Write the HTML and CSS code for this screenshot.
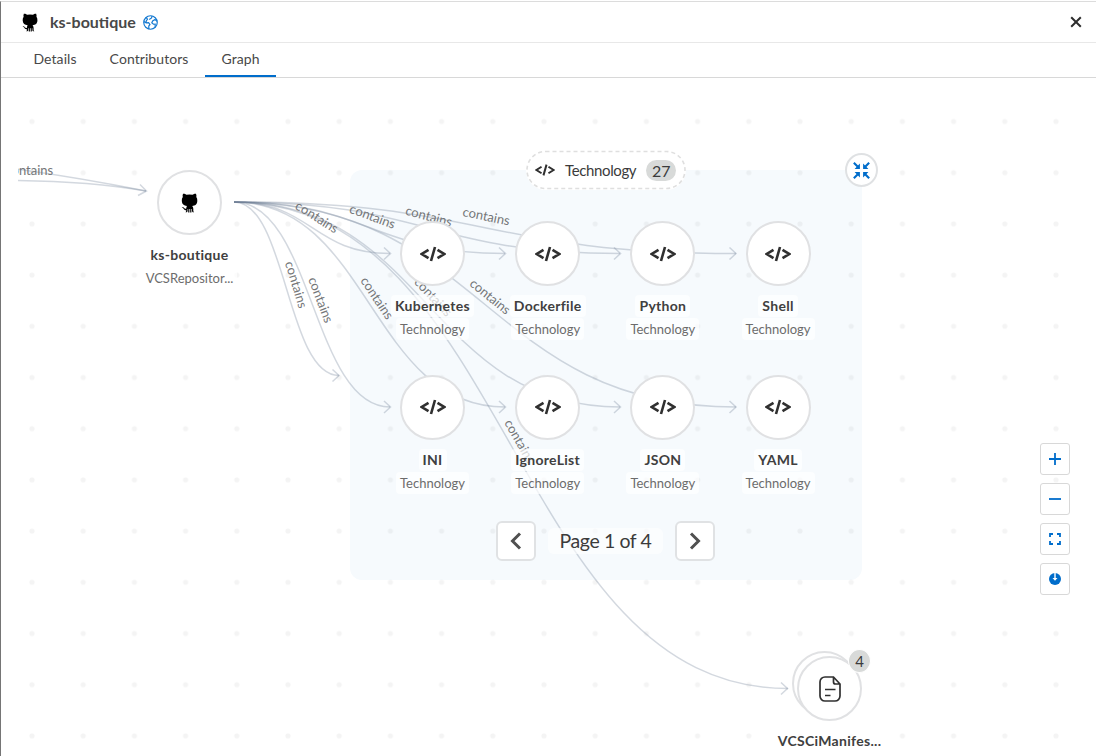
FILE: index.html
```html
<!DOCTYPE html>
<html lang="en">
<head>
<meta charset="utf-8">
<title>ks-boutique</title>
<link rel="stylesheet" href="styles.css">
</head>
<body>
<svg class="defs" width="0" height="0" aria-hidden="true">
  <symbol id="octocat" viewBox="0 0 16 20">
    <path d="M1.500 .8C2.500 .4 4.200 1.200 5 1.800Q8 1.200 11 1.800C12 1.100 13.700 .4 14.500 .8Q15.200 2.800 14.800 4Q16 5.500 15.800 8C15.600 11.500 13.700 12.700 10.700 13Q11.800 14 11.800 15.800V18.300L12.600 19.300H11.200L10.500 18.300V16H9.900V19.500H8.700V16H7.900V19.500H6.700V16H6.100V18.300L5.300 19.300H4L4.700 18.300V17.200C2.600 17.500 2.400 15.500 1.200 14.800L.2 14.100Q1.700 13.600 2.700 15.100Q3.500 16 4.800 15.500Q4.800 13.900 5.500 13C2.300 12.700 .5 11.300 .3 8Q.1 5.500 1.300 4Q.8 2.700 1.500 .8Z"/>
  </symbol>
  <symbol id="code" viewBox="0 0 26 16">
    <path d="M8.500 3.800 1.800 8l6.700 4.200M17.500 3.800 24.200 8l-6.700 4.200M15 1 11 15" fill="none" stroke="currentColor" stroke-width="2.600"/>
  </symbol>
</svg>
<div class="panel">
  <header class="header">
    <svg class="header-logo"><use href="#octocat"/></svg>
    <h1 class="title">ks-boutique</h1>
    <svg class="globe" viewBox="0 0 14 14"><circle cx="7" cy="7" r="6.300"/><path d="M.9 6.200 3 7.300 5.200 7.200 6.500 8.800 5.400 10.300V13.200M3 2.300 4.200 4 3 5.600V7.300M8.500 .9 8 2.800 5.800 4.200M13.200 6 11.200 4.200 9 5.600 8.200 7.300 9.800 8.600 11.400 8.500 11.300 11.500"/></svg>
    <svg class="close" viewBox="0 0 12 12"><path d="M1.200 1.200l9.600 9.600M10.800 1.200l-9.600 9.600"/></svg>
  </header>
  <nav class="tabs">
    <a class="tab">Details</a>
    <a class="tab">Contributors</a>
    <a class="tab tab-active">Graph</a>
  </nav>
  <main class="canvas">
    <div class="group"></div>
    <svg class="edges" viewBox="1 78 1095 678">
      <defs>
        <pattern id="dots" x="6.400" y="95.900" width="51.200" height="51.200" patternUnits="userSpaceOnUse"><circle cx="25.600" cy="25.600" r="2.500" class="dot"/></pattern>
        <clipPath id="view"><rect x="18" y="78" width="1078" height="678"/></clipPath>
      </defs>
      <rect x="1" y="78" width="1095" height="678" fill="url(#dots)"/>
      <g class="lines" clip-path="url(#view)">
        <path d="M-40 162Q50 172 146 191"/>
        <path d="M-40 181Q70 178 146 191"/>
        <path d="M140 184.500l6.500 6.500-8.500 4.500"/>
        <path id="e1" d="M234 202C312.500 202 312.500 253.500 390 253.500"/>
        <path id="e2" d="M234 202C370 202 370 253.500 505 253.500"/>
        <path id="e3" d="M234 202C427.500 202 427.500 253.500 620 253.500"/>
        <path id="e4" d="M234 202C485 202 485 253.500 736 253.500"/>
        <path id="e5" d="M234 202C312.500 202 312.500 407 390 407"/>
        <path id="e6" d="M234 202C370 202 370 407 505 407"/>
        <path id="e7" d="M234 202C427.500 202 427.500 407 620 407"/>
        <path id="e8" d="M234 202C485 202 485 407 736 407"/>
        <path id="e9" d="M234 202C286.500 202 286.500 375.500 339 375.500"/>
        <path id="e10" d="M234 202C511 202 511 688.500 788 688.500"/>
        <path d="M384 247.500l6.500 6-6.500 6M499 247.500l6.500 6-6.500 6M614 247.500l6.500 6-6.500 6M729.500 247.500l6.500 6-6.500 6M384 401l6.500 6-6.500 6M499 401l6.500 6-6.500 6M614 401l6.500 6-6.500 6M729.500 401l6.500 6-6.500 6M332.500 369.500l6.500 6-6.500 6M781 682.500l6.500 6-6.500 6"/>
      </g>
      <g class="edge-labels">
        <text x="5.500" y="174.500" class="edge-label-start" clip-path="url(#view)">contains</text>
        <text dx="-1" dy="-7"><textPath href="#e1" startOffset="50%">contains</textPath></text>
        <text dx="-1" dy="-7"><textPath href="#e2" startOffset="50%">contains</textPath></text>
        <text dx="-1" dy="-7"><textPath href="#e3" startOffset="50%">contains</textPath></text>
        <text dx="-1" dy="-7"><textPath href="#e4" startOffset="50%">contains</textPath></text>
        <text dx="-1" dy="-5"><textPath href="#e5" startOffset="50%">contains</textPath></text>
        <text dx="-1" dy="-5"><textPath href="#e6" startOffset="50%">contains</textPath></text>
        <text dx="-1" dy="-5"><textPath href="#e7" startOffset="50%">contains</textPath></text>
        <text dx="-1" dy="-5"><textPath href="#e8" startOffset="50%">contains</textPath></text>
        <text dx="-1" dy="-6"><textPath href="#e9" startOffset="50%">contains</textPath></text>
        <text dx="1" dy="-5"><textPath href="#e10" startOffset="50%">contains</textPath></text>
      </g>
    </svg>

    <div class="node repo"><div class="circle"><svg class="node-logo"><use href="#octocat"/></svg></div><b class="name">ks-boutique</b><span class="type">VCSRepositor...</span></div>

    <div class="nodes">
      <div class="node"><div class="circle"><svg class="code"><use href="#code"/></svg></div><b class="name">Kubernetes</b><span class="type">Technology</span></div>
      <div class="node"><div class="circle"><svg class="code"><use href="#code"/></svg></div><b class="name">Dockerfile</b><span class="type">Technology</span></div>
      <div class="node"><div class="circle"><svg class="code"><use href="#code"/></svg></div><b class="name">Python</b><span class="type">Technology</span></div>
      <div class="node"><div class="circle"><svg class="code"><use href="#code"/></svg></div><b class="name">Shell</b><span class="type">Technology</span></div>
      <div class="node"><div class="circle"><svg class="code"><use href="#code"/></svg></div><b class="name">INI</b><span class="type">Technology</span></div>
      <div class="node"><div class="circle"><svg class="code"><use href="#code"/></svg></div><b class="name">IgnoreList</b><span class="type">Technology</span></div>
      <div class="node"><div class="circle"><svg class="code"><use href="#code"/></svg></div><b class="name">JSON</b><span class="type">Technology</span></div>
      <div class="node"><div class="circle"><svg class="code"><use href="#code"/></svg></div><b class="name">YAML</b><span class="type">Technology</span></div>
    </div>

    <div class="group-title">
      <svg class="group-outline" viewBox="0 0 160 39"><rect x="1" y="1" width="158" height="37" rx="18.500"/></svg>
      <svg class="code code-small"><use href="#code"/></svg><span class="group-name">Technology</span><span class="count">27</span>
    </div>
    <div class="collapse"><svg viewBox="0 0 16 16"><path class="collapse-head" d="M6.500 1.500v5h-5zM9.500 1.500v5h5zM6.500 14.500v-5h-5zM9.500 14.500v-5h5z"/><path class="collapse-tail" d="M.8.8 5 5M15.200.8 11 5M.8 15.200 5 11M15.200 15.200 11 11"/></svg></div>

    <div class="pager">
      <button class="page-button"><svg viewBox="0 0 12 18"><path d="M10 1.500 2.500 9l7.500 7.500"/></svg></button>
      <span class="page-text">Page 1 of 4</span>
      <button class="page-button"><svg viewBox="0 0 12 18"><path d="M2 1.500 9.500 9 2 16.500"/></svg></button>
    </div>

    <div class="stack-back"></div>
    <div class="node manifest"><div class="circle"><svg class="document" viewBox="0 0 22 26"><path d="M6 1h8.500L21 8v12a5 5 0 0 1-5 5H6a5 5 0 0 1-5-5V6a5 5 0 0 1 5-5ZM14.500 1v5q0 2 2 2H21M6 13.500h10.500M6 19.500h5.500"/></svg></div><b class="name">VCSCiManifes...</b></div>
    <span class="count stack-count">4</span>

    <div class="tools">
      <button class="tool"><svg viewBox="0 0 14 14"><path d="M7 1v12M1 7h12"/></svg></button>
      <button class="tool"><svg viewBox="0 0 14 14"><path d="M1 7h12"/></svg></button>
      <button class="tool"><svg viewBox="0 0 14 14"><path d="M2 5V2h3M9 2h3v3M12 9v3H9M5 12H2V9"/></svg></button>
      <button class="tool"><svg viewBox="0 0 14 14"><circle cx="7" cy="7" r="6" class="solid"/><path class="knock" d="M7 0v7"/><path class="knock-head" d="M4.500 6h5L7 8.800z"/></svg></button>
    </div>
  </main>
</div>
</body>
</html>
```
FILE: styles.css
```css
* { box-sizing: border-box; }
body { margin: 0; padding-top: 1px; height: 756px; overflow: hidden; background: #fff; font-family: Lato, "Open Sans", sans-serif; color: #3b3b3b; }
.defs { position: absolute; }
.panel { display: flex; flex-direction: column; height: 755px; border-top: 1px solid #dcdcdc; border-left: 1px solid #757575; }
.header { display: flex; align-items: center; height: 41px; padding: 0 14px 0 20px; border-bottom: 1px solid #e8e8e8; }
.header-logo { width: 18px; height: 19px; margin-right: 11px; }
.title { margin: 0; padding-bottom: 2px; font-size: 16px; font-weight: 700; color: #484848; }
.globe { width: 15px; height: 15px; margin-left: 7px; fill: none; stroke: #1479d1; stroke-width: 1.100; }
.close { width: 12px; height: 12px; margin-left: auto; stroke: #2d2d2d; stroke-width: 2; }
.tabs { display: flex; height: 35px; padding-left: 16px; border-bottom: 1px solid #d8d8d8; }
.tab { display: flex; align-items: center; justify-content: center; padding: 0 16.500px 3px; height: 34px; font-size: 14px; letter-spacing: .07px; color: #484848; }
.tab-active { border-bottom: 2px solid #006dcb; padding-bottom: 1px; }
.canvas { position: relative; flex: 1; overflow: hidden; }
.group { position: absolute; left: 348.600px; top: 92px; width: 512px; height: 409.500px; border-radius: 12px; background: #f6fafd; }
.edges { position: absolute; left: 0; top: 0; width: 1095px; height: 678px; }
.dot { fill: rgba(0, 0, 0, .045); }
.lines path { fill: none; stroke: rgba(110, 125, 150, .3); stroke-width: 1.500; }
.edge-labels { font-size: 13px; fill: #747678; text-anchor: middle; }
.edge-label-start { text-anchor: start; }
.node { display: flex; flex-direction: column; align-items: center; width: 115px; }
.circle { display: flex; align-items: center; justify-content: center; width: 65px; height: 65px; border: 2px solid #e0e1e3; border-radius: 50%; background: #fff; margin-bottom: 9px; }
.name, .type { height: 22px; line-height: 22px; padding: 0 4px; border-radius: 4px; background: rgba(255, 255, 255, .7); white-space: nowrap; }
.name { font-size: 14px; letter-spacing: .3px; color: #404040; margin-bottom: 1px; }
.type { font-size: 13px; color: #6c6c6c; }
.repo { position: absolute; left: 131px; top: 92px; }
.node-logo { width: 17px; height: 20px; }
.nodes { position: absolute; left: 374px; top: 143px; display: grid; grid-template-columns: repeat(4, 115.200px); grid-template-rows: 153.500px 120px; }
.code { width: 26px; height: 16px; color: #303030; }
.code-small { width: 20px; height: 14px; }
.group-title { position: absolute; left: 525px; top: 72px; width: 160px; height: 40px; display: flex; align-items: center; padding-left: 9px; border-radius: 20px; background: #fff; }
.group-outline { position: absolute; left: 0; top: 0; width: 160px; height: 40px; fill: none; stroke: #dfdfdf; stroke-width: 1.600; stroke-dasharray: 4 3; }
.group-name { margin-left: 10px; font-size: 15px; letter-spacing: -.37px; }
.count { display: flex; align-items: center; justify-content: center; width: 30px; height: 21px; margin-left: 10px; border-radius: 11px; background: #d8dad9; font-size: 16px; }
.collapse { position: absolute; left: 844px; top: 75px; width: 33px; height: 34px; display: flex; align-items: center; justify-content: center; border: 2px solid #dfe1e3; border-radius: 50%; background: #fff; }
.collapse svg { width: 17px; height: 17px; }
.collapse-head { fill: #006dcb; }
.collapse-tail { stroke: #006dcb; stroke-width: 2; }
.pager { position: absolute; left: 495px; top: 443px; display: flex; align-items: center; gap: 12px; }
.page-button { display: flex; align-items: center; justify-content: center; width: 40px; height: 40px; padding: 0; border: 2px solid #e0e2e4; border-radius: 6px; background: #fff; }
.page-button svg { width: 12px; height: 18px; fill: none; stroke: #505050; stroke-width: 3; }
.page-text { width: 115px; height: 26px; line-height: 25px; text-align: center; border-radius: 6px; background: rgba(255, 255, 255, .6); font-size: 19.500px; letter-spacing: -.4px; }
.stack-back { position: absolute; left: 791px; top: 573px; width: 65px; height: 65px; border: 2px solid #e0e1e3; border-radius: 50%; background: #fff; }
.manifest { position: absolute; left: 771px; top: 578px; }
.document { width: 22px; height: 26px; fill: none; stroke: #303030; stroke-width: 1.700; }
.stack-count { position: absolute; left: 847px; top: 571px; margin: 0; width: 23px; height: 24px; border: 1px solid #fff; border-radius: 50%; font-size: 15px; }
.tools { position: absolute; left: 1039px; top: 365px; display: flex; flex-direction: column; gap: 8px; }
.tool { width: 30px; height: 32px; padding: 0; display: flex; align-items: center; justify-content: center; border: 1px solid #d8d8d8; border-radius: 3px; background: #fff; }
.tool svg { width: 14px; height: 14px; fill: none; stroke: #006dcb; stroke-width: 1.800; }
.tool .solid { fill: #006dcb; stroke: none; }
.tool .knock { stroke: #fff; stroke-width: 1.400; }
.tool .knock-head { fill: #fff; stroke: none; }
```
